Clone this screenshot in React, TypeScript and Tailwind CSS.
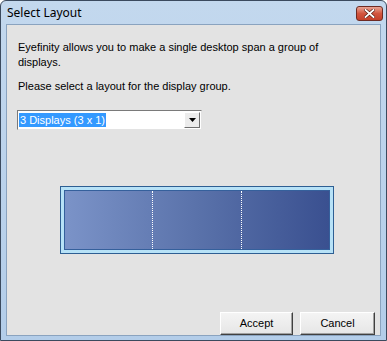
import React from "react";

export default function App() {
  const font = { fontFamily: '"Liberation Sans", Arial, sans-serif' };
  return (
    <div
      className="w-[387px] h-[341px] flex flex-col border border-[#3b4a5e] rounded-t-[6px] bg-gradient-to-b from-[#c3d8ee] to-[#b3cde9] overflow-hidden"
      style={font}
    >
      {/* Title bar */}
      <div className="h-[22px] flex items-center justify-between pl-[6px] pr-[3px] shrink-0">
        <span
          className="text-[12px] text-black leading-none mt-[1px]"
          style={{ fontFamily: '"Noto Sans", "Open Sans", sans-serif' }}
        >
          Select Layout
        </span>
        <div className="w-[27px] h-[15px] mt-[2px] rounded-[3px] border border-[#6e2a22] bg-gradient-to-b from-[#e7a394] via-[#d2553f] to-[#c4402a] flex items-center justify-center">
          <svg width="11" height="9" viewBox="0 0 11 9">
            <path d="M1.5 1 L9.5 8 M9.5 1 L1.5 8" stroke="#5a1d14" strokeWidth="3.2" strokeLinecap="square" />
            <path d="M1.5 1 L9.5 8 M9.5 1 L1.5 8" stroke="#ffffff" strokeWidth="1.8" strokeLinecap="square" />
          </svg>
        </div>
      </div>
      {/* Client area */}
      <div className="flex-1 mx-[5px] mt-[1px] mb-[4px] border border-[#8aa3bf] bg-[#e3e3e3] flex flex-col text-[11px] text-black">
        <div className="pl-[11px] pt-[15px] w-[356px] leading-[15px]">
          Eyefinity allows you to make a single desktop span a group of displays.
        </div>
        <div className="pl-[11px] mt-[9px] leading-[15px]">
          Please select a layout for the display group.
        </div>
        {/* Dropdown */}
        <div className="ml-[10px] mt-[16px] w-[185px] h-[20px] border border-[#7a7a7a] border-r-[#e3e3e3] border-b-[#e3e3e3] bg-white flex items-center p-[1px]">
          <div className="flex-1 h-full flex items-center">
            <span className="bg-[#3399ff] text-white px-[1px] leading-[14px]">3 Displays (3 x 1)</span>
          </div>
          <div className="w-[16px] h-[16px] bg-[#ececec] border border-[#ffffff] border-r-[#707070] border-b-[#707070] flex items-center justify-center">
            <svg width="7" height="4" viewBox="0 0 7 4">
              <path d="M0 0 H7 L3.5 4 Z" fill="#000" />
            </svg>
          </div>
        </div>
        {/* Display graphic */}
        <div className="flex-1 flex items-center justify-center">
          <div className="mt-[-2px] ml-[7px] w-[274px] h-[68px] border border-[#2e5f93] bg-[#b7e2f7] p-[3px]">
            <div className="w-full h-full border border-[#35609c] bg-gradient-to-r from-[#7b93c8] via-[#5a72aa] to-[#3a5090] flex">
              <div className="flex-1 border-r border-dotted border-white" />
              <div className="flex-1 border-r border-dotted border-white" />
              <div className="flex-1" />
            </div>
          </div>
        </div>
        {/* Buttons */}
        <div className="flex justify-end gap-[7px] pr-[5px] pb-[0px]">
          <button className="w-[73px] h-[23px] bg-gradient-to-b from-[#f4f4f4] to-[#e6e6e6] border border-t-white border-l-white border-r-[#404040] border-b-[#404040] shadow-[inset_-1px_-1px_0_#a0a0a0] text-[11px] text-black">
            Accept
          </button>
          <button className="w-[75px] h-[23px] bg-gradient-to-b from-[#f4f4f4] to-[#e6e6e6] border border-t-white border-l-white border-r-[#404040] border-b-[#404040] shadow-[inset_-1px_-1px_0_#a0a0a0] text-[11px] text-black">
            Cancel
          </button>
        </div>
      </div>
    </div>
  );
}
